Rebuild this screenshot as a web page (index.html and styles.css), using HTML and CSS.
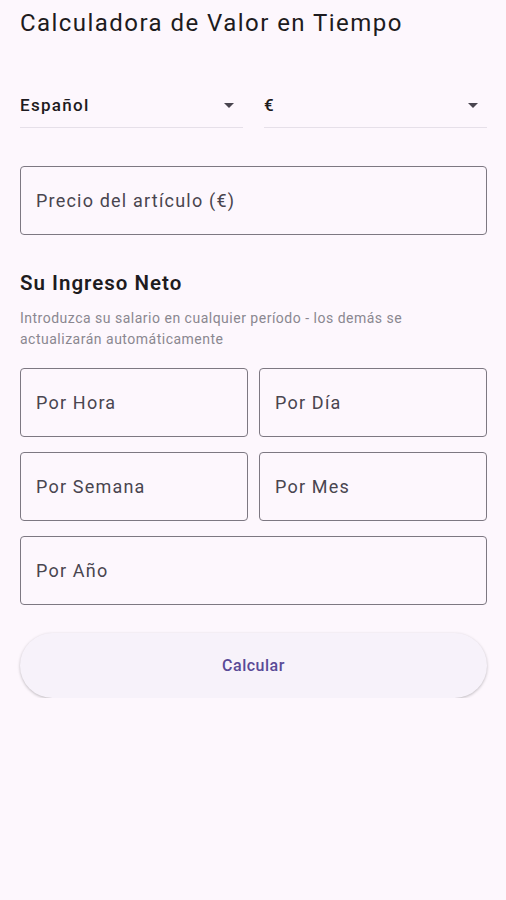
FILE: index.html
```html
<!DOCTYPE html>
<html lang="es">
<head>
<meta charset="utf-8">
<link rel="stylesheet" href="styles.css">
</head>
<body>
<div class="page">
  <h1 class="title">Calculadora de Valor en Tiempo</h1>
  <div class="selects">
    <div class="select"><span>Español</span><svg class="caret" width="10" height="5" viewBox="0 0 10 5"><path d="M0 0h10L5 5z" fill="#49454f"/></svg></div>
    <div class="select"><span>€</span><svg class="caret" width="10" height="5" viewBox="0 0 10 5"><path d="M0 0h10L5 5z" fill="#49454f"/></svg></div>
  </div>
  <div class="field field-price"><span>Precio del artículo (€)</span></div>
  <h2 class="section">Su Ingreso Neto</h2>
  <p class="hint">Introduzca su salario en cualquier período - los demás se actualizarán automáticamente</p>
  <div class="grid">
    <div class="field"><span>Por Hora</span></div>
    <div class="field"><span>Por Día</span></div>
    <div class="field"><span>Por Semana</span></div>
    <div class="field"><span>Por Mes</span></div>
    <div class="field wide"><span>Por Año</span></div>
  </div>
  <button class="btn">Calcular</button>
</div>
</body>
</html>
```
FILE: styles.css
```css
html, body {
  margin: 0;
  padding: 0;
  background: #fdf7fd;
}
body {
  font-family: Roboto, "Noto Sans", sans-serif;
  color: #1d1b20;
}
.page {
  padding: 7px 19px 0 20px;
  display: flex;
  flex-direction: column;
}
.title {
  margin: 0;
  font-size: 24px;
  font-weight: 400;
  line-height: 32px;
  letter-spacing: 1.45px;
  color: #1d1b20;
}
.selects {
  margin-top: 41px;
  display: flex;
  gap: 21px;
}
.select {
  flex: 1;
  height: 47px;
  border-bottom: 1px solid #e6e0e9;
  display: flex;
  align-items: center;
  justify-content: space-between;
  padding-right: 9px;
  font-size: 17px;
  font-weight: 500;
  letter-spacing: 1.3px;
  color: #1d1b20;
}
.select span { margin-top: 3px; }
.caret { margin-top: 3px; }
.field {
  height: 67px;
  border: 1px solid #7d7882;
  border-radius: 4px;
  display: flex;
  align-items: center;
  padding-left: 15px;
  font-size: 18px;
  letter-spacing: 1.2px;
  color: #49454f;
}
.field-price {
  margin-top: 38px;
}
.section {
  margin: 36px 0 0;
  font-size: 20.5px;
  font-weight: 600;
  line-height: 24px;
  letter-spacing: 1px;
  color: #1d1b20;
}
.hint {
  margin: 13px 0 0;
  max-width: 440px;
  font-size: 14px;
  line-height: 21px;
  letter-spacing: 0.5px;
  color: #8a8790;
}
.grid {
  margin-top: 18px;
  display: grid;
  grid-template-columns: 1fr 1fr;
  column-gap: 11px;
  row-gap: 15px;
}
.grid .wide { grid-column: 1 / 3; }
.btn {
  margin-top: 28px;
  height: 65px;
  border: none;
  border-radius: 33px;
  background: #f7f2fa;
  box-shadow: 0 1px 3px rgba(0,0,0,0.25);
  font-family: Roboto, "Noto Sans", sans-serif;
  font-size: 16px;
  font-weight: 500;
  letter-spacing: 0.5px;
  color: #5a4a97;
}
```
